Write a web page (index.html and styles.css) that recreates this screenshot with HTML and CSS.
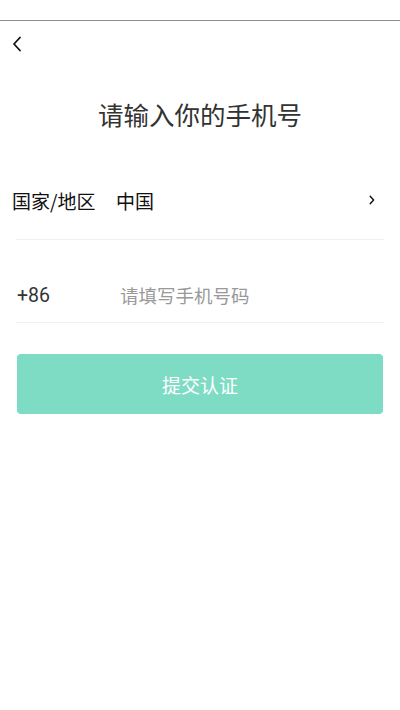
FILE: index.html
```html
<!DOCTYPE html>
<html lang="zh-CN">
<head>
  <meta charset="UTF-8" />
  <meta name="viewport" content="width=device-width, initial-scale=1.0"/>
  <title>请输入你的手机号</title>
  <link rel="stylesheet" href="styles.css">
</head>
<body>
  <div class="status-bar"></div>

  <nav class="topbar">
    <a class="back" href="#" aria-label="返回">
      <svg width="10" height="16" viewBox="0 0 10 16">
        <path d="M8 1.5 L2 8 L8 14.5" fill="none" stroke="#111" stroke-width="1.8" stroke-linecap="round" stroke-linejoin="round"/>
      </svg>
    </a>
  </nav>

  <main>
    <h1>请输入你的手机号</h1>

    <form id="phoneForm">
      <div class="row country-row">
        <span class="row-label">国家/地区</span>
        <span class="row-value">中国</span>
        <svg class="arrow" width="6" height="10" viewBox="0 0 6 10">
          <path d="M1.2 1.2 L4.6 5 L1.2 8.8" fill="none" stroke="#111" stroke-width="1.4" stroke-linecap="round" stroke-linejoin="round"/>
        </svg>
      </div>

      <div class="row phone-row">
        <span class="prefix">+86</span>
        <input type="tel" id="phone" placeholder="请填写手机号码" />
      </div>

      <button type="submit">提交认证</button>
    </form>
  </main>
</body>
</html>
```

FILE: styles.css
```css
body {
  margin: 0;
  background-color: #ffffff;
  color: #222222;
  font-family: "Noto Sans CJK SC", "Noto Sans", sans-serif;
}

.status-bar {
  height: 20px;
  border-bottom: 1px solid #8c8c8c;
}

.topbar {
  height: 45px;
  display: flex;
  align-items: center;
  padding-left: 12px;
}

.back {
  display: flex;
}

h1 {
  margin: 30px 0 0;
  text-align: center;
  font-size: 25.5px;
  line-height: 36px;
  font-weight: normal;
  color: #333333;
}

form {
  margin: 0 16px;
}

.row {
  display: flex;
  align-items: center;
  border-bottom: 1px solid #f2f2f2;
}

.country-row {
  height: 78px;
  margin-top: 29px;
  font-size: 19px;
  color: #111111;
}

.row-label {
  width: 104px;
  margin-left: -4px;
}

.row-value {
  flex: 1;
}

.arrow {
  margin-right: 9px;
}

.phone-row {
  height: 36px;
  padding: 37px 0 9px;
}

.prefix {
  width: 103px;
  padding-left: 1px;
  font-family: Roboto, "Noto Sans", sans-serif;
  font-size: 19.5px;
  color: #333333;
}

input {
  flex: 1;
  border: none;
  outline: none;
  padding: 0;
  font-family: "Noto Sans CJK SC", sans-serif;
  font-size: 18.5px;
  color: #222222;
  background: transparent;
}

input::placeholder {
  color: #999999;
}

button {
  display: block;
  width: calc(100% - 2px);
  height: 60px;
  margin: 31px 1px 0;
  border: none;
  border-radius: 4px;
  background-color: #7edcc5;
  color: #ffffff;
  font-family: "Noto Sans CJK SC", sans-serif;
  font-size: 19px;
  cursor: pointer;
}
```
